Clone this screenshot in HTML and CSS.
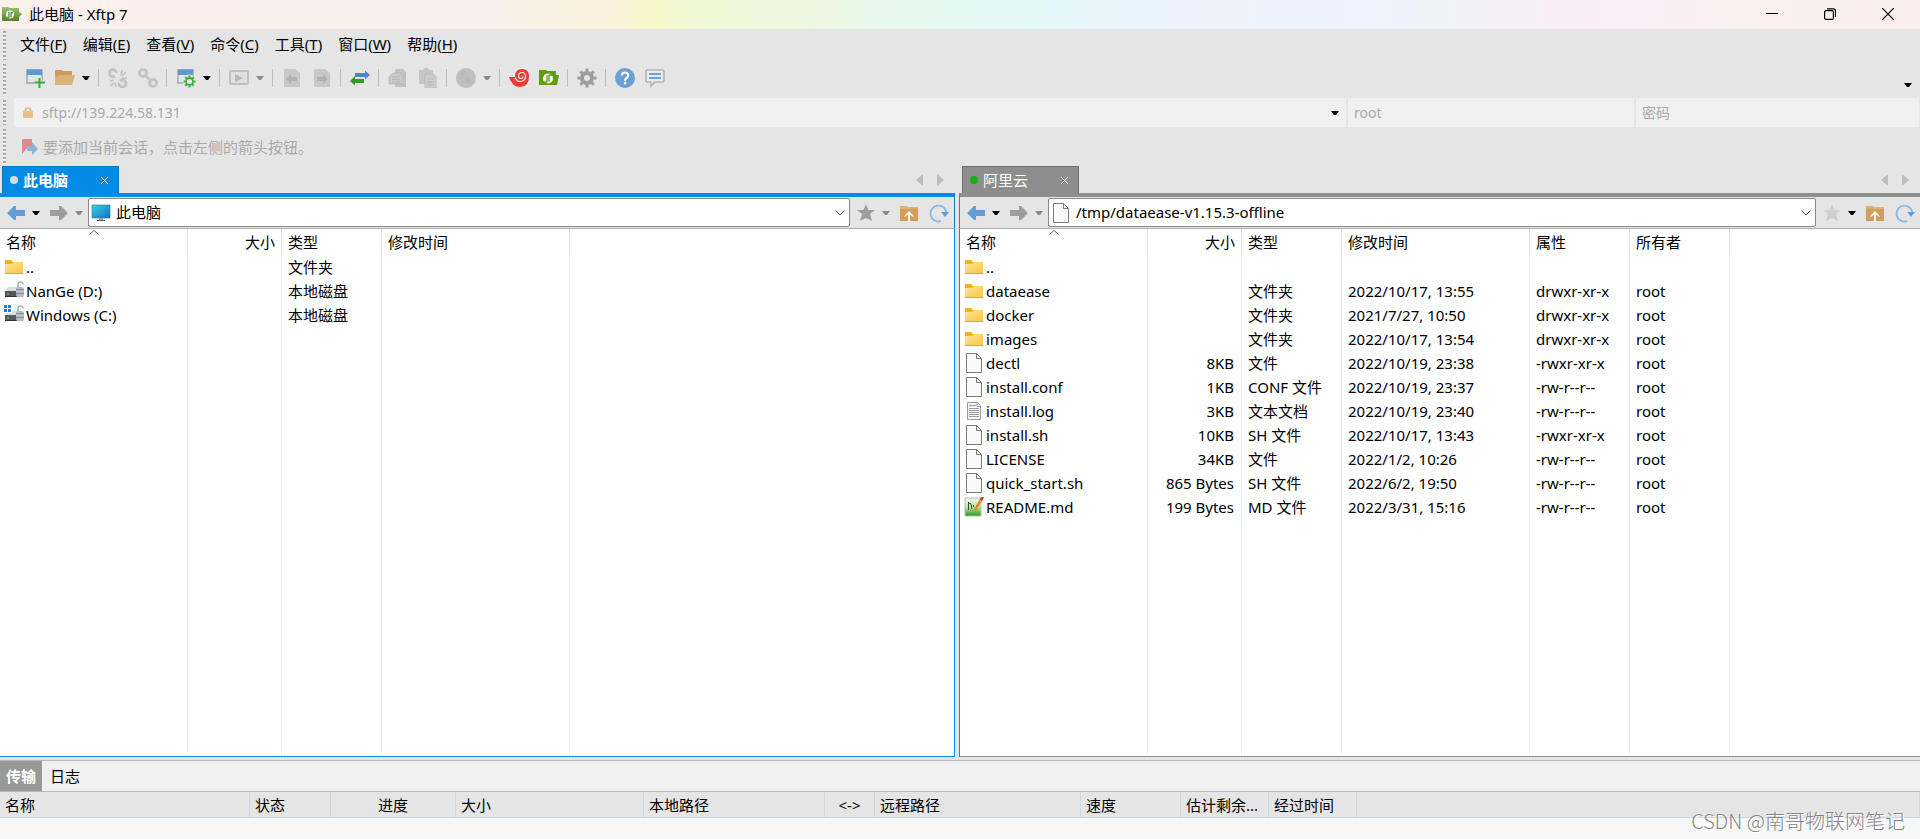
FILE: index.html
```html
<!DOCTYPE html>
<html lang="zh-CN">
<head>
<meta charset="utf-8">
<title>此电脑 - Xftp 7</title>
<link rel="stylesheet" href="styles.css">
</head>
<body>
<svg class="sprite" aria-hidden="true">
  <defs>
    <linearGradient id="g-folder" x1="0" y1="0" x2="1" y2="1"><stop offset="0" stop-color="#ffe69a"/><stop offset="1" stop-color="#fcc43c"/></linearGradient>
    <linearGradient id="g-screen" x1="0" y1="0" x2="1" y2="1"><stop offset="0" stop-color="#35d6e4"/><stop offset="1" stop-color="#0f6fc8"/></linearGradient>
    <linearGradient id="g-app" x1="0" y1="0" x2="0" y2="1"><stop offset="0" stop-color="#9cc46a"/><stop offset="1" stop-color="#557f2a"/></linearGradient>
    <linearGradient id="g-md" x1="0" y1="0" x2="0" y2="1"><stop offset="0" stop-color="#f2f6f0"/><stop offset=".5" stop-color="#c3e6a8"/><stop offset="1" stop-color="#1f9a10"/></linearGradient>
  </defs>
  <symbol id="folder" viewBox="0 0 20 20"><path d="M1 4a1 1 0 0 1 1-1h5l2 2h9a1 1 0 0 1 1 1v4H1z" fill="#f5b01e"/><path d="M1 7h7l2-2h9v12H1z" fill="url(#g-folder)"/><path d="M1 16h18v1H1z" fill="#e6a52a"/></symbol>
  <symbol id="file" viewBox="0 0 20 20"><path d="M2.500.5h10l5 5v14h-15z" fill="#fafafa" stroke="#7b7b7b"/><path d="M12.500.5v5h5" fill="none" stroke="#7b7b7b"/></symbol>
  <symbol id="log" viewBox="0 0 20 20"><path d="M3.500 1.500h10l3 3v14h-13z" fill="#f5f5f5" stroke="#9a9a9a"/><path d="M13 1.500v4h4" fill="none" stroke="#9a9a9a"/><path d="M5 4.500h7M5 7.500h10M5 9.500h10M5 11.500h10M5 13.500h10M5 15.500h10" stroke="#9c9c9c"/></symbol>
  <symbol id="md" viewBox="0 0 20 20"><path d="M1 1h16v18H1z" fill="url(#g-md)" stroke="#b4c4ac"/><path d="M4.500 5v8M4.500 6q3 0 3 3v3" fill="none" stroke="#3c4a38"/><path d="M9 9h1M12 9h1" stroke="#3c4a38" stroke-width="2"/><path d="M18 1l-7 12" stroke="#e38a1f" stroke-width="2.500"/><path d="M19 0l-2 3" stroke="#9c4a24" stroke-width="2.500"/></symbol>
  <symbol id="disk" viewBox="0 0 20 20"><path d="M4 6h11l3 4H1z" fill="#dcdfe2"/><path d="M1 10h18v6H1z" fill="#55585b"/><path d="M1 15h18v1H1z" fill="#323436"/><circle cx="4" cy="13" r="1" fill="#39d838"/><path d="M14 7V3.500a2.500 2.500 0 0 1 5 0" fill="none" stroke="#a7b0b8" stroke-width="1.600"/><rect x="12" y="6" width="8" height="10" rx="2" fill="#b5bfc8"/><path d="M12 8.500h8M12 12.500h8" stroke="#3f9be0"/></symbol>
  <symbol id="windisk" viewBox="0 0 20 20"><use href="#disk"/><path d="M0 0h8v8H0z" fill="#fff"/><path d="M0 0h3v3H0zM4 0h3v3H4zM0 4h3v3H0zM4 4h3v3H4z" fill="#1480d8"/></symbol>
  <symbol id="pc" viewBox="0 0 20 20"><path d="M1 2h18v13H1z" fill="url(#g-screen)" stroke="#28699c" stroke-width=".6"/><path d="M8 15h4v2H8z" fill="#9aa4ac"/><path d="M6 17h8v1H6z" fill="#4d5860"/></symbol>
  <symbol id="dd" viewBox="0 0 8 8"><path d="M0 2h8L5 6H3z" fill="currentColor"/></symbol>
  <symbol id="back" viewBox="0 0 20 20"><path d="M1 10l7-7h2v4h9v6h-9v4H8z" fill="currentColor"/></symbol>
  <symbol id="fwd" viewBox="0 0 20 20"><path d="M19 10l-7-7h-2v4H1v6h9v4h2z" fill="currentColor"/></symbol>
  <symbol id="star" viewBox="0 0 20 20"><path d="M10 1l2.500 6H19l-5 4 2 7-6-3-6 3 2-7-5-4h6.500z" fill="currentColor"/></symbol>
  <symbol id="up" viewBox="0 0 20 20"><path d="M1 3h7l1 1h10v14H1z" fill="#dcb174"/><path d="M1 6h18v12H1z" fill="#d49c59"/><path d="M10 8l5 5-1 1-3-2v7H9v-7l-3 2-1-1z" fill="#f2f2f2"/></symbol>
  <symbol id="refresh" viewBox="0 0 20 20"><path d="M12 18.200A8 8 0 1 1 17.500 10" fill="none" stroke="#8bb9e2" stroke-width="1.800"/><path d="M12 9h8l-4 5z" fill="#5f9fd8"/></symbol>
  <symbol id="newwin" viewBox="0 0 20 20"><path d="M2 2h15v13H2z" fill="#e2e6e8" stroke="#a0a4a6" stroke-width="1.400"/><path d="M2 1.500h15V7H2z" fill="#5d9ad2"/></symbol>
  <symbol id="gear" viewBox="0 0 20 20"><g fill="none" stroke="currentColor"><circle cx="10" cy="10" r="5" stroke-width="4"/><path d="M10 .5v3M10 16.500v3M.5 10h3M16.500 10h3M3.300 3.300l2 2M14.700 14.700l2 2M3.300 16.700l2-2M14.700 5.300l2-2" stroke-width="3"/></g></symbol>
  <symbol id="chain" viewBox="0 0 20 20"><g fill="none" stroke="#c4c4c4"><circle cx="5" cy="5" r="3.500" stroke-width="3"/><circle cx="15" cy="15" r="3.500" stroke-width="3"/><path d="M7 7l6 6" stroke-width="2.500"/></g></symbol>
  <symbol id="unchain" viewBox="0 0 20 20"><g fill="none" stroke="#c4c4c4"><path d="M7 8A3.500 3.500 0 1 1 8.500 5M12 13a3.500 3.500 0 1 1-1 2" stroke-width="3"/><path d="M13 7l1-5M14 8l4-4M14 10h5M2 13l4-1M2 18l4-3M8 19l-1-4" stroke-width="1.600"/></g></symbol>
  <symbol id="page-l" viewBox="0 0 20 20"><path d="M2 1h11l5 4v14H2z" fill="#c8c8c8"/><path d="M4 11l5-5v3h6v4H9v3z" fill="#b2b2b2"/></symbol>
  <symbol id="page-r" viewBox="0 0 20 20"><path d="M2 1h11l5 4v14H2z" fill="#c8c8c8"/><path d="M16 11l-5-5v3H5v4h6v3z" fill="#b2b2b2"/></symbol>
  <symbol id="copy" viewBox="0 0 20 20"><path d="M7 1h8l3 3v15H7z" fill="#c2c2c2"/><path d="M5 5h7l3 3v8H1V9z" fill="#cacaca" stroke="#b4b4b4" stroke-width=".8"/><path d="M4 9h8M4 11.500h8M4 14h8" stroke="#b4b4b4"/></symbol>
  <symbol id="paste" viewBox="0 0 20 20"><path d="M1 2h4l1-2h4l1 2h4v14H1z" fill="#c6c6c6"/><path d="M7 6h8l3 3v11H7z" fill="#cdcdcd" stroke="#b6b6b6" stroke-width=".8"/><path d="M9 11h7M9 14h7M9 17h7" stroke="#b6b6b6"/></symbol>
</svg>

<header class="titlebar">
  <svg class="i20" viewBox="0 0 20 20"><path d="M0 3h6l1 1h10v4l3 2-3 3v4H0z" fill="url(#g-app)"/><circle cx="8" cy="10.500" r="4" fill="#fff"/><path d="M7 8v5q0 1-2 0M9 13.500V9q0-1 2 0" fill="none" stroke="#5d8a30" stroke-width="1.300"/></svg>
  <h1>此电脑 - Xftp 7</h1>
  <button class="win" aria-label="最小化"><svg class="i12" viewBox="0 0 12 12"><path d="M0 5.500h12" stroke="#000"/></svg></button>
  <button class="win" aria-label="还原"><svg class="i12" viewBox="0 0 12 12"><g fill="none" stroke="#000" stroke-width="1.200"><rect x=".6" y="2.600" width="8.800" height="8.800" rx="1.500"/><path d="M3 .8h6.500a2 2 0 0 1 2 2V9"/></g></svg></button>
  <button class="win" aria-label="关闭"><svg class="i12" viewBox="0 0 12 12"><path d="M0 0l12 12M12 0L0 12" stroke="#000" stroke-width="1.200"/></svg></button>
</header>

<div class="bars">
  <nav class="bar menubar">
    <button>文件(<u>F</u>)</button><button>编辑(<u>E</u>)</button><button>查看(<u>V</u>)</button><button>命令(<u>C</u>)</button><button>工具(<u>T</u>)</button><button>窗口(<u>W</u>)</button><button>帮助(<u>H</u>)</button>
  </nav>
  <div class="bar toolbar">
    <button class="tool" aria-label="新建"><svg class="i20" viewBox="0 0 20 20"><use href="#newwin"/><path d="M14.500 9v11M9 14.500h11" stroke="#e5e5e5" stroke-width="4"/><path d="M14.500 10v10M9.500 14.500h10.500" stroke="#2fb02a" stroke-width="2"/></svg></button>
    <button class="tool" aria-label="打开"><svg class="i20" viewBox="0 0 20 20"><path d="M0 2h7l1 1h9v4H4L0 16z" fill="#cf9b5d"/><path d="M4 7h16l-3 10H0V9z" fill="#dcb27a"/></svg></button>
    <button class="drop" aria-label="打开列表"><svg class="i8"><use href="#dd"/></svg></button>
    <i class="sep"></i>
    <button class="tool" aria-label="断开"><svg class="i20"><use href="#unchain"/></svg></button>
    <button class="tool" aria-label="重新连接"><svg class="i20"><use href="#chain"/></svg></button>
    <i class="sep"></i>
    <button class="tool" aria-label="属性"><svg class="i20" viewBox="0 0 20 20"><use href="#newwin"/><circle cx="13" cy="13" r="6.500" fill="#e5e5e5"/><g fill="none" stroke="#3cb034"><circle cx="13.500" cy="13.500" r="3.500" stroke-width="1.800"/><path d="M13.500 7.500v2M13.500 17.500v2M7.500 13.500h2M17.500 13.500h2M9.300 9.300l1.500 1.500M16.200 16.200l1.500 1.500M9.300 17.700l1.500-1.500M16.200 10.800l1.500-1.500" stroke-width="2"/></g></svg></button>
    <button class="drop" aria-label="属性列表"><svg class="i8"><use href="#dd"/></svg></button>
    <i class="sep"></i>
    <button class="tool" aria-label="执行"><svg class="i20" viewBox="0 0 20 20"><rect x="1" y="3" width="18" height="13" rx="1" fill="#e0e0e0" stroke="#c0c0c0" stroke-width="2"/><path d="M6 6l8 4-8 4z" fill="#b8b8b8"/></svg></button>
    <button class="drop off" aria-label="执行列表"><svg class="i8"><use href="#dd"/></svg></button>
    <i class="sep"></i>
    <button class="tool" aria-label="传输到左侧"><svg class="i20"><use href="#page-l"/></svg></button>
    <button class="tool" aria-label="传输到右侧"><svg class="i20"><use href="#page-r"/></svg></button>
    <i class="sep"></i>
    <button class="tool" aria-label="同步"><svg class="i20" viewBox="0 0 20 20"><path d="M20 7l-5-4.500V5H5v4h10v2.500z" fill="#4a86cf"/><path d="M0 13l5-5v3h9v4H5v2.500z" fill="#2ca023"/></svg></button>
    <i class="sep"></i>
    <button class="tool" aria-label="复制"><svg class="i20"><use href="#copy"/></svg></button>
    <button class="tool" aria-label="粘贴"><svg class="i20"><use href="#paste"/></svg></button>
    <i class="sep"></i>
    <button class="tool" aria-label="浏览器"><svg class="i20" viewBox="0 0 20 20"><circle cx="10" cy="10" r="10" fill="#bfbfbf"/><path d="M4 5q4-4 6-2-1 4-4 4zM10 9l5 2-2 5-4-3z" fill="#b8b8b8"/></svg></button>
    <button class="drop off" aria-label="浏览器列表"><svg class="i8"><use href="#dd"/></svg></button>
    <i class="sep"></i>
    <button class="tool" aria-label="Xshell"><svg class="i20" viewBox="0 0 20 20"><path d="M0 9h6Q6 1 13 1t7 7q0 11-9 11Q3 19 0 9z" fill="#ee3b33"/><path d="M6 9.500Q8 14 12 13.500q4.500-1 4.500-5T13 4.500Q9.500 4.500 9.500 8q0 2.500 2.500 2.500 2 0 1.800-2" fill="none" stroke="#e5e5e5" stroke-width="1.200"/></svg></button>
    <button class="tool" aria-label="Xftp"><svg class="i20" viewBox="0 0 20 20"><path d="M0 2h7l1 1h9v4h3l-2 10H0z" fill="#639c0c"/><circle cx="9" cy="10.500" r="5" fill="#fff"/><path d="M8 7.500v6q-1 1.500-3 0M10 13.500v-6q1-1.500 3 0" fill="none" stroke="#639c0c" stroke-width="1.400"/></svg></button>
    <i class="sep"></i>
    <button class="tool gray" aria-label="选项"><svg class="i20"><use href="#gear"/></svg></button>
    <i class="sep"></i>
    <button class="tool" aria-label="帮助"><svg class="i20" viewBox="0 0 20 20"><circle cx="10" cy="10" r="10" fill="#6a9fd8"/><path d="M6.800 7.500Q7 4.500 10 4.500t3.200 2.800Q13.200 9 11.500 10 10 11 10 13" fill="none" stroke="#fff" stroke-width="2.200"/><path d="M9 14h2.300v2.300H9z" fill="#fff"/></svg></button>
    <button class="tool" aria-label="反馈"><svg class="i20" viewBox="0 0 20 20"><path d="M3 2h14q2 0 2 2v8q0 2-2 2h-7l-4 4v-4H3q-2 0-2-2V4q0-2 2-2z" fill="#ececec" stroke="#b2b4b6" stroke-width="1.600"/><path d="M4 6h12M4 10h12" stroke="#6ba2de" stroke-width="2"/></svg></button>
    <button class="drop more" aria-label="工具栏选项"><svg class="i8"><use href="#dd"/></svg></button>
  </div>
  <div class="bar address">
    <label class="field host"><svg class="i12" viewBox="0 0 12 12"><path d="M3.500 6V3.500Q3.500 1 6 1t2.500 2.500V6" fill="none" stroke="#dfb888" stroke-width="1.600"/><rect x="1" y="4" width="10" height="7" rx="1" fill="#e8c08c"/></svg><input aria-label="主机" value="sftp://139.224.58.131"><svg class="i8"><use href="#dd"/></svg></label>
    <label class="field"><input aria-label="用户名" value="root"></label>
    <label class="field"><input aria-label="密码" placeholder="密码"></label>
  </div>
  <div class="bar links">
    <svg class="i18" viewBox="0 0 18 18"><path d="M1 1h10v12l-5-3-5 6z" fill="#e4888b"/><path d="M6 8h5V4l6 7-6 6v-4H6z" fill="#93b3d6"/></svg>
    <span>要添加当前会话，点击左侧的箭头按钮。</span>
  </div>
</div>

<main class="panes">
  <section class="pane local">
    <div class="tabs">
      <button class="tab"><i class="dot"></i><b>此电脑</b><svg class="i7" viewBox="0 0 7 7"><path d="M0 0l7 7M7 0L0 7" stroke="#fff"/></svg></button>
      <span class="tabnav"><svg viewBox="0 0 8 12"><path d="M8 0v12L1 6z" fill="#bdbdbd"/></svg><svg viewBox="0 0 8 12"><path d="M0 0v12l7-6z" fill="#bdbdbd"/></svg></span>
    </div>
    <div class="path">
      <button class="nav blue" aria-label="后退"><svg class="i20"><use href="#back"/></svg></button><button class="drop" aria-label="后退列表"><svg class="i8"><use href="#dd"/></svg></button>
      <button class="nav gray" aria-label="前进"><svg class="i20"><use href="#fwd"/></svg></button><button class="drop off" aria-label="前进列表"><svg class="i8"><use href="#dd"/></svg></button>
      <label class="combo"><svg class="i20"><use href="#pc"/></svg><input aria-label="本地路径" value="此电脑"><svg class="chev" viewBox="0 0 10 6"><path d="M.5.5L5 5 9.500.5" fill="none" stroke="#444"/></svg></label>
      <button class="nav gray" aria-label="收藏"><svg class="i20"><use href="#star"/></svg></button><button class="drop off" aria-label="收藏列表"><svg class="i8"><use href="#dd"/></svg></button>
      <button class="nav" aria-label="上一级"><svg class="i20"><use href="#up"/></svg></button><button class="nav last" aria-label="刷新"><svg class="i20"><use href="#refresh"/></svg></button>
    </div>
    <div class="list">
      <table>
        <colgroup><col class="w188"><col class="w94"><col class="w100"><col class="w188"><col></colgroup>
        <thead><tr><th>名称<svg class="sort" viewBox="0 0 10 5"><path d="M.5 4.500L5 .5l4.500 4" fill="none" stroke="#666"/></svg></th><th class="num">大小</th><th>类型</th><th>修改时间</th><th class="rest"></th></tr></thead>
        <tbody>
          <tr><td class="name"><svg class="i20"><use href="#folder"/></svg>..</td><td></td><td>文件夹</td><td></td><td class="rest"></td></tr>
          <tr><td class="name"><svg class="i20"><use href="#disk"/></svg>NanGe (D:)</td><td></td><td>本地磁盘</td><td></td><td class="rest"></td></tr>
          <tr><td class="name"><svg class="i20"><use href="#windisk"/></svg>Windows (C:)</td><td></td><td>本地磁盘</td><td></td><td class="rest"></td></tr>
          <tr class="fill"><td></td><td></td><td></td><td></td><td class="rest"></td></tr>
        </tbody>
      </table>
    </div>
  </section>

  <section class="pane remote">
    <div class="tabs">
      <button class="tab"><i class="dot"></i><span>阿里云</span><svg class="i7" viewBox="0 0 7 7"><path d="M0 0l7 7M7 0L0 7" stroke="#fff"/></svg></button>
      <span class="tabnav"><svg viewBox="0 0 8 12"><path d="M8 0v12L1 6z" fill="#bdbdbd"/></svg><svg viewBox="0 0 8 12"><path d="M0 0v12l7-6z" fill="#bdbdbd"/></svg></span>
    </div>
    <div class="path">
      <button class="nav blue" aria-label="后退"><svg class="i20"><use href="#back"/></svg></button><button class="drop" aria-label="后退列表"><svg class="i8"><use href="#dd"/></svg></button>
      <button class="nav gray" aria-label="前进"><svg class="i20"><use href="#fwd"/></svg></button><button class="drop off" aria-label="前进列表"><svg class="i8"><use href="#dd"/></svg></button>
      <label class="combo"><svg class="i20"><use href="#file"/></svg><input aria-label="远程路径" value="/tmp/dataease-v1.15.3-offline"><svg class="chev" viewBox="0 0 10 6"><path d="M.5.5L5 5 9.500.5" fill="none" stroke="#444"/></svg></label>
      <button class="nav pale" aria-label="收藏"><svg class="i20"><use href="#star"/></svg></button><button class="drop" aria-label="收藏列表"><svg class="i8"><use href="#dd"/></svg></button>
      <button class="nav" aria-label="上一级"><svg class="i20"><use href="#up"/></svg></button><button class="nav last" aria-label="刷新"><svg class="i20"><use href="#refresh"/></svg></button>
    </div>
    <div class="list">
      <table>
        <colgroup><col class="w188"><col class="w94"><col class="w100"><col class="w188"><col class="w100"><col class="w100"><col></colgroup>
        <thead><tr><th>名称<svg class="sort" viewBox="0 0 10 5"><path d="M.5 4.500L5 .5l4.500 4" fill="none" stroke="#666"/></svg></th><th class="num">大小</th><th>类型</th><th>修改时间</th><th>属性</th><th>所有者</th><th class="rest"></th></tr></thead>
        <tbody>
          <tr><td class="name"><svg class="i20"><use href="#folder"/></svg>..</td><td></td><td></td><td></td><td></td><td></td><td class="rest"></td></tr>
          <tr><td class="name"><svg class="i20"><use href="#folder"/></svg>dataease</td><td></td><td>文件夹</td><td>2022/10/17, 13:55</td><td>drwxr-xr-x</td><td>root</td><td class="rest"></td></tr>
          <tr><td class="name"><svg class="i20"><use href="#folder"/></svg>docker</td><td></td><td>文件夹</td><td>2021/7/27, 10:50</td><td>drwxr-xr-x</td><td>root</td><td class="rest"></td></tr>
          <tr><td class="name"><svg class="i20"><use href="#folder"/></svg>images</td><td></td><td>文件夹</td><td>2022/10/17, 13:54</td><td>drwxr-xr-x</td><td>root</td><td class="rest"></td></tr>
          <tr><td class="name"><svg class="i20"><use href="#file"/></svg>dectl</td><td class="num">8KB</td><td>文件</td><td>2022/10/19, 23:38</td><td>-rwxr-xr-x</td><td>root</td><td class="rest"></td></tr>
          <tr><td class="name"><svg class="i20"><use href="#file"/></svg>install.conf</td><td class="num">1KB</td><td>CONF 文件</td><td>2022/10/19, 23:37</td><td>-rw-r--r--</td><td>root</td><td class="rest"></td></tr>
          <tr><td class="name"><svg class="i20"><use href="#log"/></svg>install.log</td><td class="num">3KB</td><td>文本文档</td><td>2022/10/19, 23:40</td><td>-rw-r--r--</td><td>root</td><td class="rest"></td></tr>
          <tr><td class="name"><svg class="i20"><use href="#file"/></svg>install.sh</td><td class="num">10KB</td><td>SH 文件</td><td>2022/10/17, 13:43</td><td>-rwxr-xr-x</td><td>root</td><td class="rest"></td></tr>
          <tr><td class="name"><svg class="i20"><use href="#file"/></svg>LICENSE</td><td class="num">34KB</td><td>文件</td><td>2022/1/2, 10:26</td><td>-rw-r--r--</td><td>root</td><td class="rest"></td></tr>
          <tr><td class="name"><svg class="i20"><use href="#file"/></svg>quick_start.sh</td><td class="num">865 Bytes</td><td>SH 文件</td><td>2022/6/2, 19:50</td><td>-rw-r--r--</td><td>root</td><td class="rest"></td></tr>
          <tr><td class="name"><svg class="i20"><use href="#md"/></svg>README.md</td><td class="num">199 Bytes</td><td>MD 文件</td><td>2022/3/31, 15:16</td><td>-rw-r--r--</td><td>root</td><td class="rest"></td></tr>
          <tr class="fill"><td></td><td></td><td></td><td></td><td></td><td></td><td class="rest"></td></tr>
        </tbody>
      </table>
    </div>
  </section>
</main>

<footer class="transfer">
  <div class="ttabs"><button class="on">传输</button><button>日志</button></div>
  <table>
    <colgroup><col class="w250"><col class="w81"><col class="w125"><col class="w188"><col class="w181"><col class="w50"><col class="w206"><col class="w100"><col class="w88"><col class="w88"><col></colgroup>
    <thead><tr><th>名称</th><th>状态</th><th class="mid">进度</th><th>大小</th><th>本地路径</th><th class="mid">&lt;-&gt;</th><th>远程路径</th><th>速度</th><th>估计剩余...</th><th>经过时间</th><th class="rest"></th></tr></thead>
  </table>
  <p class="mark">CSDN @南哥物联网笔记</p>
</footer>
</body>
</html>
```
FILE: styles.css
```css
* { box-sizing: border-box; }
body {
  margin: 0;
  height: 100vh;
  display: flex;
  flex-direction: column;
  overflow: hidden;
  background: #e5e5e5;
  color: #000;
  font: 15px/20px "Noto Sans", "Noto Sans CJK SC", sans-serif;
}
button, input {
  font: inherit;
  color: inherit;
  border: 0;
  padding: 0;
  margin: 0;
  background: none;
}
input { flex: 1; min-width: 0; outline: 0; }
svg { display: block; flex: none; }
.sprite { position: absolute; width: 0; height: 0; }
.i7 { width: 7px; height: 7px; }
.i8 { width: 8px; height: 8px; }
.i12 { width: 12px; height: 12px; }
.i18 { width: 18px; height: 18px; }
.i20 { width: 20px; height: 20px; }

.titlebar {
  display: flex;
  align-items: center;
  height: 29px;
  padding: 0 3px 2px 2px;
  background: linear-gradient(90deg, #fbf0ec 0%, #f9f0ea 26%, #f9f2da 32%, #f7f6c8 34%, #f1f8d5 36%, #ebf7e0 42%, #e6f8ef 48%, #e3f8f8 54%, #eaf4fb 58%, #eef3fc 72%, #eff3f7 75%, #f9eef7 81%, #f9f0f1 91%, #faeeed 100%);
}
.titlebar h1 { flex: 1; margin: 0 0 0 7px; font-size: 15px; font-weight: 400; }
.win { width: 58px; height: 28px; display: grid; place-items: center; }

.bar {
  position: relative;
  display: flex;
  align-items: center;
  padding-left: 14px;
}
.bar::before {
  content: "";
  position: absolute;
  left: 3px;
  top: 2px;
  bottom: 2px;
  width: 3px;
  background: repeating-linear-gradient(180deg, #a8a8a8 0 2px, #f4f4f4 2px 3px, #e5e5e5 3px 4px);
}
.menubar { height: 33px; gap: 16px; padding: 0 0 4px 20px; }
.menubar u { text-underline-offset: 2px; }
.toolbar { height: 36px; padding: 0 5px 4px 20px; }
.tool { width: 30px; height: 30px; display: grid; place-items: center; }
.drop { width: 15px; height: 30px; padding-right: 3px; display: grid; place-items: center; }
.off { color: #8a8a8a; }
.more { margin-left: auto; padding: 14px 0 0; }
.sep { width: 1px; height: 18px; margin: 0 4px 0 3px; background: #bcbcbc; }
.gray { color: #9d9d9d; }
.blue { color: #5f9fd6; }
.pale { color: #cfcfcf; }

.address {
  display: grid;
  grid-template-columns: minmax(0, 1332fr) minmax(0, 286fr) minmax(0, 283fr);
  height: 29px;
  gap: 2px;
  padding-right: 1px;
  align-items: stretch;
  font-size: 14px;
}
.field { display: flex; align-items: center; background: #f0f0f0; color: #a9a9a9; padding: 0 6px; }
.field input::placeholder { color: #a9a9a9; opacity: 1; }
.host { padding: 0 7px 0 8px; gap: 8px; }
.host .i8 { color: #000; }
.links { height: 39px; padding: 0 0 0 21px; gap: 4px; color: #a9a9a9; }

.panes { flex: 1; min-height: 0; display: flex; gap: 4px; }
.pane { min-width: 0; display: flex; flex-direction: column; }
.local { flex: 955; --accent: #038be5; --edge: #0a78c0; --dot: #d4dde4; }
.remote { flex: 961; --accent: #8e8e8e; --edge: #707070; --dot: #12b212; }
.tabs { display: flex; justify-content: space-between; height: 27px; padding: 0 10px 0 2px; }
.remote .tabs { padding-left: 3px; }
.tab {
  display: flex;
  align-items: center;
  width: 117px;
  height: 27px;
  padding: 0 10px 0 7px;
  gap: 5px;
  background: var(--accent);
  border: 1px solid var(--edge);
  border-bottom: 0;
  color: #fff;
}
.dot { width: 8px; height: 8px; border-radius: 50%; background: var(--dot); }
.tab .i7 { margin-left: auto; }
.tabnav { display: flex; align-items: center; gap: 14px; }
.tabnav svg { width: 8px; height: 12px; }
.path {
  display: flex;
  align-items: center;
  height: 36px;
  padding: 0 1px 0 2px;
  border-top: 4px solid var(--accent);
  border-bottom: 1px solid #b0b0b0;
}
.remote .path { border-left: 1px solid var(--edge); }
.local .path { border-right: 1px solid var(--edge); }
.nav { width: 28px; height: 30px; display: grid; place-items: center; }
.last { margin-left: 2px; }
.combo {
  flex: 1;
  display: flex;
  align-items: center;
  height: 29px;
  margin-right: 2px;
  padding: 0 4px 0 2px;
  gap: 5px;
  background: #fff;
  border: 1px solid #8a8a8a;
  border-radius: 2px;
}
.combo input { padding-bottom: 2px; }
.chev { width: 10px; height: 6px; }

.list { flex: 1; min-height: 0; background: #fff; border-bottom: 1px solid var(--accent); }
.local .list { border-right: 1px solid var(--accent); }
.remote .list { border-left: 1px solid var(--edge); }
table { width: 100%; table-layout: fixed; border-collapse: separate; border-spacing: 0; }
.list table { height: 100%; }
th, td { padding: 0 6px; text-align: left; font-weight: 400; white-space: nowrap; overflow: hidden; border-right: 1px solid #e8f1fa; }
.list th { position: relative; height: 26px; border-color: #e2e2e2; }
.list td { height: 24px; }
.list .fill td { height: auto; }
th.rest, td.rest { border-right: 0; }
.list .num { text-align: right; }
.list td.num { padding-right: 7px; }
.name svg { display: inline-block; vertical-align: top; margin: 0 2px 0 -2px; }
.sort { position: absolute; left: 50%; top: 1px; width: 10px; height: 5px; margin-left: -5px; }
.w50 { width: 50px; }
.w81 { width: 81px; }
.w88 { width: 88px; }
.w94 { width: 94px; }
.w100 { width: 100px; }
.w125 { width: 125px; }
.w181 { width: 181px; }
.w188 { width: 188px; }
.w206 { width: 206px; }
.w250 { width: 250px; }

.transfer { position: relative; height: 79px; margin-top: 3px; border-top: 1px solid #b8b8b8; background: #f8f8f8; }
.ttabs { display: flex; height: 31px; background: #f0f0f0; border-bottom: 1px solid #b8b8b8; }
.ttabs button { width: 42px; }
.ttabs .on { background: #999; color: #fff; font-weight: 700; }
.ttabs .on + button { width: 46px; }
.transfer th { height: 26px; padding: 0 5px; background: #e5e5e5; border-right: 1px solid #ccd8e6; border-bottom: 1px solid #ccd8e6; }
.transfer .mid { text-align: center; }
.mark {
  position: absolute;
  right: 15px;
  bottom: 6px;
  margin: 0;
  font: 300 20px/24px "Noto Sans CJK SC", sans-serif;
  color: #858585;
  text-shadow: 1px 1px 0 #fff;
}
```
